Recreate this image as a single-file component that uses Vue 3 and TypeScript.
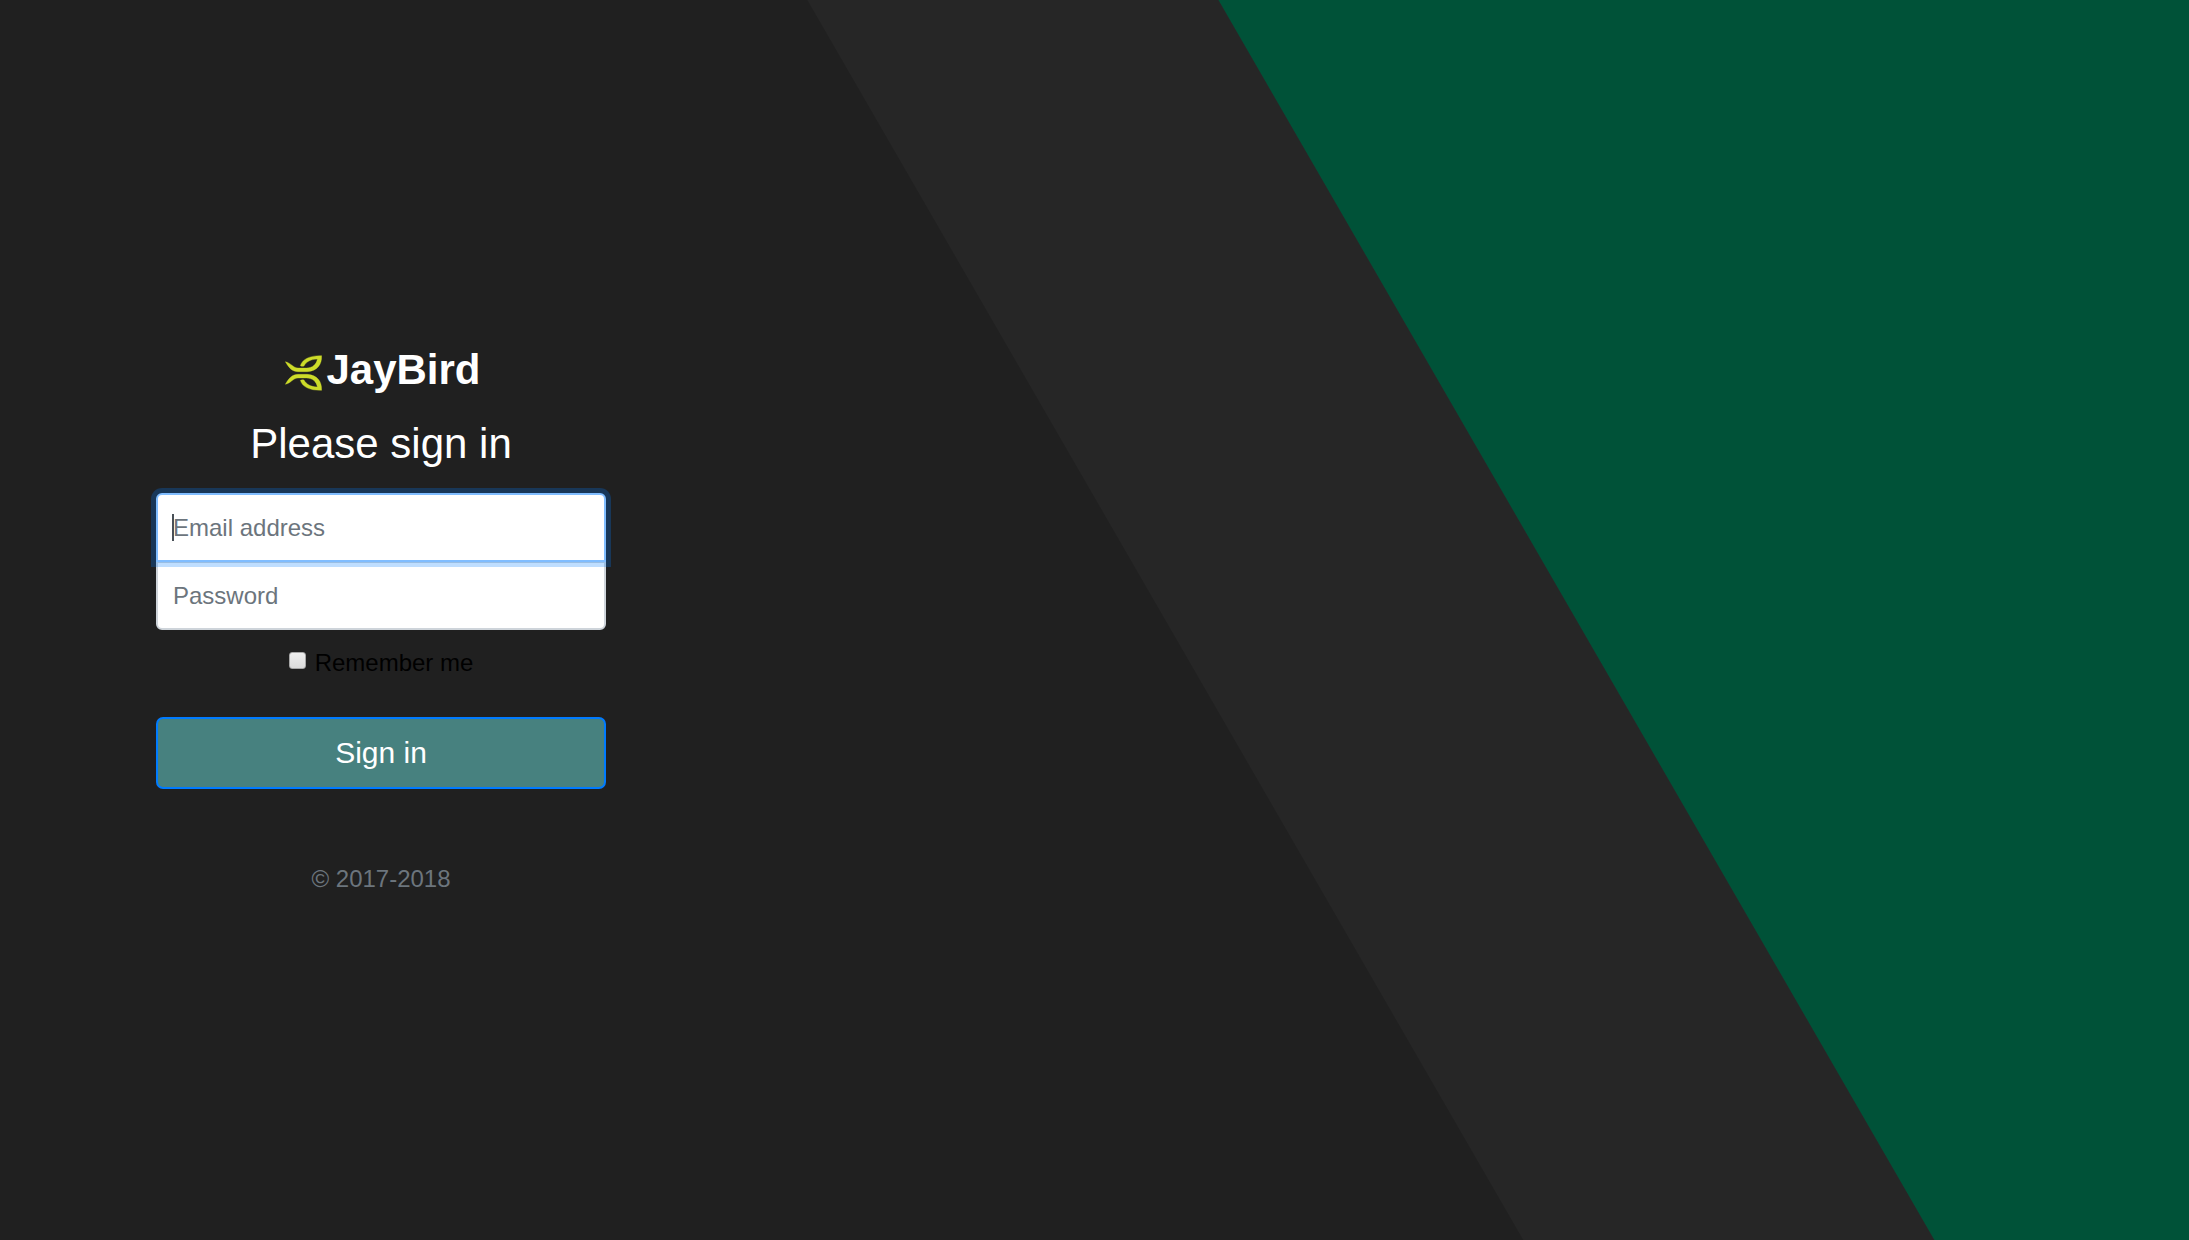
<script setup lang="ts">
import { ref } from 'vue'

const email = ref('')
const password = ref('')
const remember = ref(false)
</script>

<template>
  <main class="page">
    <form class="signin" @submit.prevent>
      <div class="brand">
        <svg class="brand-mark" viewBox="45 59 111 108" aria-hidden="true">
          <path
            id="wing"
            d="M46 79C57 98 67 109 84 109L112 109C142 107 156 87 155 61C122 60 97 70 91 91C94 93 98 94 102 92C109 79 122 72 142 71C139 87 129 97 110 98L84 98C70 98 62 82 46 79Z"
          />
          <use href="#wing" transform="matrix(1 0 0 -1 0 226)" />
        </svg>
        <span>JayBird</span>
      </div>
      <h1>Please sign in</h1>
      <div class="field email">
        <input v-model="email" type="email" placeholder="Email address" aria-label="Email address" />
        <span class="caret"></span>
      </div>
      <div class="field password">
        <input v-model="password" type="password" placeholder="Password" aria-label="Password" />
      </div>
      <label class="remember">
        <input v-model="remember" type="checkbox" />
        <span>Remember me</span>
      </label>
      <button type="submit">Sign in</button>
      <p>© 2017-2018</p>
    </form>
  </main>
</template>

<style>
body {
  margin: 0;
  background: #202020;
}
</style>

<style scoped>
.page {
  box-sizing: border-box;
  min-height: 100vh;
  display: flex;
  align-items: center;
  padding: 26px 156px 24px;
  font-family: "Liberation Sans", Arial, sans-serif;
  font-size: 24px;
  line-height: 36px;
  background: linear-gradient(60deg, #202020 52.42%, #262626 52.46%, #262626 66.57%, #005238 66.61%);
}

.signin {
  width: 100%;
  max-width: 450px;
  display: flex;
  flex-direction: column;
  text-align: center;
}

.brand {
  display: flex;
  justify-content: center;
  align-items: center;
  gap: 4px;
  margin-bottom: 24px;
  padding-left: 4px;
  color: #fff;
  font-size: 42px;
  font-weight: 700;
  line-height: 50px;
}

.brand-mark {
  width: 37px;
  height: 36px;
  margin-top: 6px;
  fill: #cddc29;
  stroke: #cddc29;
  stroke-width: 1px;
}

h1 {
  margin: 0 0 24px;
  color: #fff;
  font-size: 42px;
  font-weight: 400;
  line-height: 50px;
}

.field {
  position: relative;
}

.field input {
  display: block;
  box-sizing: border-box;
  width: 100%;
  height: 69px;
  padding: 14px 15px;
  border: 2px solid #ced4da;
  background: #fff;
  color: #495057;
  font: inherit;
  outline: none;
}

.field input::placeholder {
  color: #6c757d;
  opacity: 1;
}

.email {
  z-index: 1;
  margin-bottom: -1px;
}

.email input {
  border-color: #80bdff;
  border-radius: 6px 6px 0 0;
  box-shadow: 0 0 0 5px rgba(0, 123, 255, 0.25);
}

.password input {
  border-radius: 0 0 6px 6px;
}

.caret {
  position: absolute;
  top: 21px;
  left: 16px;
  width: 2px;
  height: 27px;
  background: #495057;
}

.remember {
  display: flex;
  justify-content: center;
  align-items: center;
  gap: 9px;
  margin: 15px 0 36px;
  color: #000;
}

.remember input {
  appearance: none;
  box-sizing: border-box;
  width: 17px;
  height: 17px;
  margin: 0 0 5px;
  border: 1px solid #a6a6a6;
  border-radius: 3px;
  background: linear-gradient(#eee, #dcdcdc);
}

.remember input:checked {
  background: #0075ff;
}

button {
  height: 72px;
  border: 2px solid #007bff;
  border-radius: 7px;
  background: #47817f;
  color: #fff;
  font: inherit;
  font-size: 30px;
  cursor: pointer;
}

p {
  margin: 72px 0 0;
  color: #6c757d;
}
</style>
